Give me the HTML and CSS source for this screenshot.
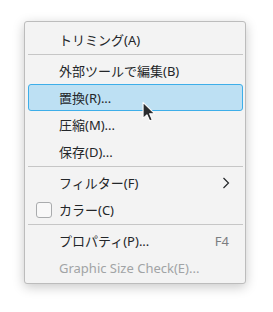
FILE: index.html
```html
<!DOCTYPE html>
<html lang="ja">
<head>
<meta charset="utf-8">
<link rel="stylesheet" href="styles.css">
</head>
<body>
<div class="menu">
  <div class="item"><span class="label">トリミング(A)</span></div>
  <div class="sep"></div>
  <div class="item"><span class="label">外部ツールで編集(B)</span></div>
  <div class="item active"><span class="label">置換(R)...</span></div>
  <div class="item"><span class="label">圧縮(M)...</span></div>
  <div class="item"><span class="label">保存(D)...</span></div>
  <div class="sep"></div>
  <div class="item"><span class="label">フィルター(F)</span>
    <svg class="chev" width="8" height="12" viewBox="0 0 8 12"><path d="M1.5 1 L6.5 6 L1.5 11" fill="none" stroke="#232629" stroke-width="1.2"/></svg>
  </div>
  <div class="item"><span class="check"></span><span class="label">カラー(C)</span></div>
  <div class="sep"></div>
  <div class="item"><span class="label">プロパティ(P)...</span><span class="shortcut">F4</span></div>
  <div class="item disabled"><span class="label">Graphic Size Check(E)...</span></div>
</div>
<svg class="cursor" width="15" height="22" viewBox="0 0 14 20"><path d="M1 1 L1 16 L4.6 12.6 L7.2 18.4 L9.6 17.3 L7.1 11.7 L12 11.7 Z" fill="#2b2d30" stroke="#ffffff" stroke-width="1" stroke-linejoin="round"/></svg>
</body>
</html>
```
FILE: styles.css
```css
html, body {
  margin: 0;
  padding: 0;
  background: #ffffff;
}
body {
  position: relative;
  width: 273px;
  height: 312px;
  overflow: hidden;
  font-family: "Noto Sans", "Noto Sans CJK JP", sans-serif;
  font-size: 13px;
  color: #232629;
}
.menu {
  margin: 21px 0 0 24px;
  width: 222px;
  background: #f3f3f3;
  border: 1px solid #bcbcbc;
  border-radius: 3px;
  box-shadow: 0 3px 12px rgba(0, 0, 0, 0.22);
  padding: 4px 2px 2px 3px;
  box-sizing: border-box;
  display: flex;
  flex-direction: column;
}
.item {
  position: relative;
  height: 27px;
  display: flex;
  align-items: center;
  padding: 0 12px 0 30px;
  border: 1px solid transparent;
  border-radius: 3px;
  box-sizing: border-box;
}
.item.active {
  background: #bde0f3;
  border-color: #3daee9;
}
.item.disabled {
  color: #a1a3a5;
}
.label {
  flex: 1;
  white-space: nowrap;
}
.shortcut {
  color: #7b7d80;
  margin-right: 1px;
}
.chev {
  display: block;
}
.check {
  position: absolute;
  left: 7px;
  top: 5px;
  width: 16px;
  height: 16px;
  box-sizing: border-box;
  border: 1px solid #a9abad;
  border-radius: 3px;
  background: #f8f8f8;
}
.sep {
  height: 1px;
  background: #c6c6c6;
  margin: 1px 0 2px 0;
}
.cursor {
  position: absolute;
  left: 142px;
  top: 101px;
}
```
